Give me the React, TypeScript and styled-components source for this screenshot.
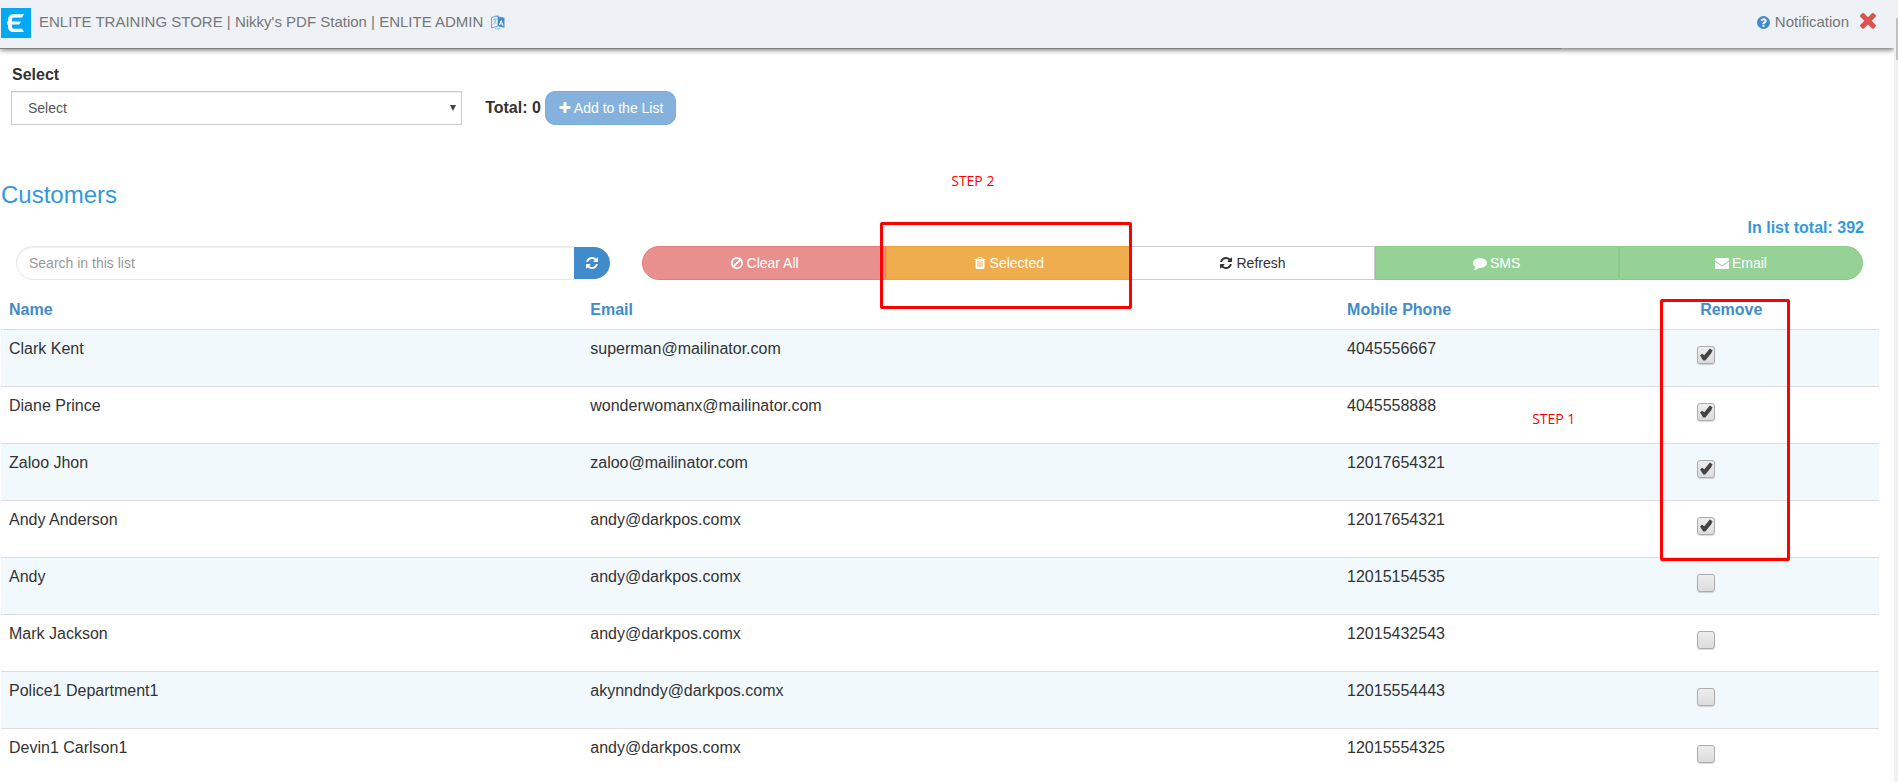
import React from 'react';
import styled, { createGlobalStyle, css } from 'styled-components';

const GlobalStyle = createGlobalStyle`
  *, *::before, *::after { box-sizing: border-box; }
  body {
    margin: 0;
    overflow: hidden;
    background: #fff;
    color: #333;
    font: 16px/24px "Liberation Sans", Arial, sans-serif;
  }
  button, input, select { font-family: inherit; }
`;

/* ---------- icons ---------- */

const ICONS = {
  question:
    'M1024 1376v-192q0-14-9-23t-23-9h-192q-14 0-23 9t-9 23v192q0 14 9 23t23 9h192q14 0 23-9t9-23zm256-672q0-88-55.5-163t-138.5-116-170-41q-243 0-371 213-15 24 8 42l132 100q7 6 19 6 16 0 25-12 53-68 86-92 34-24 86-24 48 0 85.5 26t37.5 59q0 38-20 61t-68 45q-63 28-115.5 86.5t-52.5 125.5v36q0 14 9 23t23 9h192q14 0 23-9t9-23q0-19 21.5-49.5t54.5-49.5q32-18 49-28.5t46-35 44.5-48 28-60.5 12.5-81zm384 192q0 209-103 385.5t-279.5 279.5-385.5 103-385.5-103-279.5-279.5-103-385.5 103-385.5 279.5-279.5 385.5-103 385.5 103 279.5 279.5 103 385.5z',
  times:
    'M1490 1322q0 40-28 68l-136 136q-28 28-68 28t-68-28l-294-294-294 294q-28 28-68 28t-68-28l-136-136q-28-28-28-68t28-68l294-294-294-294q-28-28-28-68t28-68l136-136q28-28 68-28t68 28l294 294 294-294q28-28 68-28t68 28l136 136q28 28 28 68t-28 68l-294 294 294 294q28 28 28 68z',
  plus:
    'M1600 736v192q0 40-28 68t-68 28h-416v416q0 40-28 68t-68 28h-192q-40 0-68-28t-28-68v-416h-416q-40 0-68-28t-28-68v-192q0-40 28-68t68-28h416v-416q0-40 28-68t68-28h192q40 0 68 28t28 68v416h416q40 0 68 28t28 68z',
  refresh:
    'M1639 1056q0 5-1 7-64 268-268 434.5t-478 166.5q-146 0-282.5-55t-243.5-157l-129 129q-19 19-45 19t-45-19-19-45v-448q0-26 19-45t45-19h448q26 0 45 19t19 45-19 45l-137 137q71 66 161 102t187 36q134 0 250-65t186-179q11-17 53-117 8-23 30-23h192q13 0 22.5 9.5t9.5 22.5zm25-800v448q0 26-19 45t-45 19h-448q-26 0-45-19t-19-45 19-45l138-138q-148-137-349-137-134 0-250 65t-186 179q-11 17-53 117-8 23-30 23h-199q-13 0-22.5-9.5t-9.5-22.5v-7q65-268 270-434.5t480-166.5q146 0 284 55.5t245 156.5l130-129q19-19 45-19t45 19 19 45z',
  ban:
    'M1440 893q0-161-87-295l-754 753q137 89 297 89 111 0 211.5-43.5t173.5-116.5 116-174.5 43-212.5zm-999 299l755-754q-135-91-300-91-148 0-273 73t-198 199-73 274q0 162 89 299zm1223-299q0 157-61 300t-163.5 246-245 164-298.5 61-298.5-61-245-164-163.5-246-61-300 61-299.5 163.5-245.5 245-164 298.5-61 298.5 61 245 164 163.5 245.5 61 299.5z',
  trash:
    'M704 1376v-704q0-14-9-23t-23-9h-64q-14 0-23 9t-9 23v704q0 14 9 23t23 9h64q14 0 23-9t9-23zm256 0v-704q0-14-9-23t-23-9h-64q-14 0-23 9t-9 23v704q0 14 9 23t23 9h64q14 0 23-9t9-23zm256 0v-704q0-14-9-23t-23-9h-64q-14 0-23 9t-9 23v704q0 14 9 23t23 9h64q14 0 23-9t9-23zm-544-992h448l-48-117q-7-9-17-11h-317q-10 2-17 11zm928 32v64q0 14-9 23t-23 9h-96v948q0 83-47 143.5t-113 60.5h-832q-66 0-113-58.5t-47-141.5v-952h-96q-14 0-23-9t-9-23v-64q0-14 9-23t23-9h309l70-167q15-37 54-63t79-26h320q40 0 79 26t54 63l70 167h309q14 0 23 9t9 23z',
  comment:
    'M1792 896q0 174-120 321.5t-326 233-450 85.5q-70 0-145-8-198 175-460 242-49 14-114 22-17 2-30.5-9t-17.5-29v-1q-3-4-.5-12t2-10 4.5-9.500l6-9 7-8.500 8-9q7-8 31-34.500t34.500-38 31-39.500 32.500-51 27-59 26-76q-157-89-247.500-220t-90.500-281q0-130 71-248.500t191-204.500 286-136.500 348-50.500q244 0 450 85.500t326 233 120 321.500z',
  envelope:
    'M1792 710v794q0 66-47 113t-113 47h-1472q-66 0-113-47t-47-113v-794q44 49 101 87 362 246 497 345 57 42 92.5 65.5t94.5 48 110 24.5h2q51 0 110-24.5t94.5-48 92.5-65.5q170-123 498-345 57-39 100-87zm0-294q0 79-49 151t-122 123q-376 261-468 325-10 7-42.5 31t-54 38.5-52 32.5-57.5 27-50 9h-2q-23 0-50-9t-57.5-27-52-32.5-54-38.5-42.5-31q-91-64-262-182.5t-205-142.5q-62-42-117-115.5t-55-136.5q0-78 41.5-130t118.5-52h1472q65 0 112.5 47t47.5 113z',
};

type IconName = keyof typeof ICONS;

const Svg = styled.svg`
  display: block;
  flex: none;
  fill: currentColor;
`;

const Icon = ({ name, size = 14 }: { name: IconName; size?: number }) => (
  <Svg width={size} height={size} viewBox="0 0 1792 1792" aria-hidden="true">
    <path d={ICONS[name]} />
  </Svg>
);

const Logo = () => (
  <Svg width="30" height="30" viewBox="0 0 30 30" aria-label="Enlite">
    <rect width="30" height="30" fill="#03a9f4" />
    <path
      d="M23 6.200L21 9.500H12.500Q11 9.500 11 11V13.500H20L18.200 16.500H11V19Q11 20.700 12.700 20.700H21L23 24H12.500Q7 24 7 18.500V16.500H6V13.500H7V12Q7 6.200 12.500 6.200Z"
      fill="#fff"
    />
  </Svg>
);

const LanguageIcon = () => (
  <Svg width="14" height="15" viewBox="0 0 14 15" aria-hidden="true">
    <path d="M.5 2.500L7 .7V11L.5 13Z" fill="#eef1f6" stroke="#6ba3d6" strokeWidth="1" />
    <path d="M2 5l3.500-1M3.800 3.200v1.300M5 4.500Q4.500 7.500 2 9.500M2.700 6.200Q4 8.200 5.500 8.500" fill="none" stroke="#8db9e0" />
    <path d="M4 .8L13.500 2.800V3.500L7 2.300Z" fill="#428bca" />
    <path d="M7 2.300l6.500 1v9.500L7 11.200Z" fill="#428bca" />
    <path d="M8.500 10l1.700-4.500 1.900 5.500M9.100 8.600l2.300.6" fill="none" stroke="#fff" />
    <path d="M4 13.500q3 1.200 5.500-.3" fill="none" stroke="#8db9e0" />
  </Svg>
);

/* ---------- page frame ---------- */

const Page = styled.div`
  display: grid;
  grid-template-columns: minmax(0, 1fr) 4px;
  height: 100vh;
  overflow: hidden;
`;

const Main = styled.main`
  min-width: 0;
`;

const ScrollTrack = styled.div`
  padding: 18px 0 0 2px;
  background: #f1f1f1;
`;

const ScrollThumb = styled.div`
  height: 42px;
  background: #c1c1c1;
`;

const Header = styled.header`
  display: flex;
  align-items: flex-start;
  height: 48px;
  padding: 8px 14px 0 1px;
  background: #eef1f6;
  color: #777;
  font-size: 15px;
  box-shadow: 0 2px 5px rgba(0, 0, 0, 0.55);
`;

const HeaderTitle = styled.span`
  display: flex;
  align-items: center;
  gap: 8px;
  height: 28px;
  margin-left: 8px;
`;

const HeaderLine = styled.div`
  width: 82.4%;
  height: 1px;
  background: #808080;
`;

const Notification = styled.a`
  display: flex;
  align-items: center;
  gap: 4px;
  height: 28px;
  margin-left: auto;
  color: #777;
  text-decoration: none;

  svg { color: #428bca; }
`;

const CloseButton = styled.button`
  display: flex;
  margin: 0 0 0 7px;
  padding: 0;
  border: 0;
  background: none;
  color: #d9534f;
  cursor: pointer;
`;

/* ---------- list picker ---------- */

const Picker = styled.section`
  padding: 14px 11px 0;
`;

const PickerLabel = styled.label`
  display: block;
  padding: 0 1px;
  font-weight: bold;
`;

const PickerRow = styled.div`
  display: flex;
  align-items: center;
  margin-top: 4px;
`;

const SelectWrap = styled.div`
  position: relative;
  width: 24.1%;

  &::after {
    content: '';
    position: absolute;
    top: 14px;
    right: 6px;
    border: 3px solid transparent;
    border-top: 6px solid #444;
    border-bottom: 0;
    pointer-events: none;
  }
`;

const Select = styled.select`
  display: block;
  width: 100%;
  height: 34px;
  padding: 0 16px;
  border: 1px solid #ccc;
  border-radius: 0;
  background: #fff;
  box-shadow: inset 0 1px 1px rgba(0, 0, 0, 0.075);
  color: #555;
  font-size: 14px;
  appearance: none;
`;

const Total = styled.strong`
  margin: 0 4px 0 23px;
`;

const AddButton = styled.button`
  display: flex;
  align-items: center;
  gap: 2px;
  height: 34px;
  padding: 0 12px;
  border: 1px solid #79abd9;
  border-radius: 10px;
  background: #85b2dc;
  color: #fff;
  font-size: 14px;
  cursor: pointer;
`;

/* ---------- toolbar ---------- */

const Heading = styled.h1`
  margin: 53px 0 0;
  padding: 0 1px;
  color: #3598db;
  font-size: 24px;
  font-weight: normal;
  line-height: 34px;
`;

const ListTotal = styled.p`
  margin: 4px 30px 0 0;
  color: #3598db;
  font-weight: bold;
  text-align: right;
`;

const Toolbar = styled.div`
  display: flex;
  gap: 32px;
  margin-top: 6px;
  padding: 0 31px 0 16px;
`;

const SearchForm = styled.form`
  display: flex;
  align-items: center;
  flex: 594 1 0;
  min-width: 0;
`;

const SearchInput = styled.input`
  flex: 1;
  min-width: 0;
  height: 34px;
  padding: 0 12px;
  border: 1px solid #e8e8e8;
  border-right: 0;
  border-radius: 17px 0 0 17px;
  box-shadow: inset 0 1px 1px rgba(0, 0, 0, 0.075);
  color: #555;
  font-size: 14px;

  &::placeholder { color: #999; opacity: 1; }
`;

const SearchButton = styled.button`
  display: flex;
  align-items: center;
  justify-content: center;
  width: 36px;
  height: 32px;
  padding: 0;
  border: 0;
  border-radius: 0 16px 16px 0;
  background: #428bca;
  color: #fff;
  cursor: pointer;
`;

const ButtonGroup = styled.div`
  display: flex;
  flex: 1221 1 0;
`;

const ButtonSlot = styled.div`
  position: relative;
  flex: 1 1 0;
`;

type Tone = 'danger' | 'warning' | 'plain' | 'success';

const tones: Record<Tone, ReturnType<typeof css>> = {
  danger: css`background: #e8908d; border-color: #e27d7a; color: #fff;`,
  warning: css`background: #f0ad4e; border-color: #eea236; color: #fff;`,
  plain: css`background: #fff; border-color: #ccc; color: #333;`,
  success: css`background: #96d296; border-color: #88ca88; color: #fff;`,
};

const GroupButton = styled.button<{ $tone: Tone; $edge?: 'start' | 'end' }>`
  display: flex;
  align-items: center;
  justify-content: center;
  gap: 3px;
  width: 100%;
  height: 34px;
  padding: 0;
  border: 1px solid;
  border-radius: ${({ $edge }) =>
    $edge === 'start' ? '17px 0 0 17px' : $edge === 'end' ? '0 17px 17px 0' : '0'};
  font-size: 14px;
  cursor: pointer;
  ${({ $tone }) => tones[$tone]}
`;

/* ---------- annotations over the page ---------- */

const Frame = styled.span<{ $area: 'button' | 'column' }>`
  position: absolute;
  z-index: 1;
  border: 3px solid #f00;
  border-radius: 2px;
  pointer-events: none;
  ${({ $area }) =>
    $area === 'button'
      ? css`top: -24px; right: -2px; bottom: -29px; left: -6px;`
      : css`top: 2px; left: -32px; width: 130px; height: 262px;`}
`;

const Note = styled.span<{ $area: 'button' | 'column' }>`
  position: absolute;
  color: #f00;
  font: 14px/20px "Open Sans", sans-serif;
  white-space: nowrap;
  ${({ $area }) =>
    $area === 'button' ? css`top: -75px; left: 65px;` : css`top: 112px; left: -160px;`}
`;

/* ---------- table ---------- */

const Table = styled.table`
  width: calc(100% - 16px);
  margin: 17px 15px 0 1px;
  border-collapse: collapse;
  table-layout: fixed;
`;

const Col = styled.col<{ $width: string }>`
  width: ${({ $width }) => $width};
`;

const HeadCell = styled.th`
  position: relative;
  height: 32px;
  padding: 1px 8px 0;
  color: #428bca;
  text-align: left;
  vertical-align: top;
`;

const Row = styled.tr`
  height: 57px;
  border-top: 1px solid #ddd;

  &:nth-child(odd) { background: #f1f9fd; }
`;

const Cell = styled.td`
  padding: 7px 8px 0;
  vertical-align: top;
`;

const CheckCell = styled.td`
  padding: 16px 5px 0;
  vertical-align: top;
`;

const Checkbox = styled.input`
  display: block;
  width: 18px;
  height: 18px;
  margin: 0;
  border: 1px solid #acacac;
  border-radius: 3px;
  background: linear-gradient(#ededed, #dcdcdc);
  box-shadow: 0 1px 1px rgba(0, 0, 0, 0.15);
  appearance: none;

  &:checked::after {
    content: '';
    display: block;
    width: 16px;
    height: 16px;
    background: #444;
    clip-path: polygon(12% 56%, 24% 45%, 39% 55%, 73% 12%, 90% 24%, 82% 42%, 45% 88%, 32% 88%);
  }
`;

const customers = [
  { name: 'Clark Kent', email: 'superman@mailinator.com', phone: '4045556667', remove: true },
  { name: 'Diane Prince', email: 'wonderwomanx@mailinator.com', phone: '4045558888', remove: true },
  { name: 'Zaloo Jhon', email: 'zaloo@mailinator.com', phone: '12017654321', remove: true },
  { name: 'Andy Anderson', email: 'andy@darkpos.comx', phone: '12017654321', remove: true },
  { name: 'Andy', email: 'andy@darkpos.comx', phone: '12015154535', remove: false },
  { name: 'Mark Jackson', email: 'andy@darkpos.comx', phone: '12015432543', remove: false },
  { name: 'Police1 Department1', email: 'akynndndy@darkpos.comx', phone: '12015554443', remove: false },
  { name: 'Devin1 Carlson1', email: 'andy@darkpos.comx', phone: '12015554325', remove: false },
];

export default function App() {
  return (
    <Page>
      <GlobalStyle />
      <Main>
        <Header>
          <Logo />
          <HeaderTitle>
            ENLITE TRAINING STORE | Nikky's PDF Station | ENLITE ADMIN
            <LanguageIcon />
          </HeaderTitle>
          <Notification href="#notification">
            <Icon name="question" size={15} />
            Notification
          </Notification>
          <CloseButton type="button" aria-label="Close">
            <Icon name="times" size={24} />
          </CloseButton>
        </Header>
        <HeaderLine />

        <Picker>
          <PickerLabel htmlFor="list">Select</PickerLabel>
          <PickerRow>
            <SelectWrap>
              <Select id="list" defaultValue="">
                <option value="">Select</option>
              </Select>
            </SelectWrap>
            <Total>Total: 0</Total>
            <AddButton type="button">
              <Icon name="plus" />
              Add to the List
            </AddButton>
          </PickerRow>
        </Picker>

        <Heading>Customers</Heading>
        <ListTotal>In list total: 392</ListTotal>

        <Toolbar>
          <SearchForm onSubmit={(e) => e.preventDefault()}>
            <SearchInput type="text" aria-label="Search in this list" placeholder="Search in this list" />
            <SearchButton type="submit" aria-label="Search">
              <Icon name="refresh" />
            </SearchButton>
          </SearchForm>
          <ButtonGroup>
            <ButtonSlot>
              <GroupButton type="button" $tone="danger" $edge="start">
                <Icon name="ban" />
                Clear All
              </GroupButton>
            </ButtonSlot>
            <ButtonSlot>
              <GroupButton type="button" $tone="warning">
                <Icon name="trash" />
                Selected
              </GroupButton>
              <Frame $area="button" />
              <Note $area="button">STEP 2</Note>
            </ButtonSlot>
            <ButtonSlot>
              <GroupButton type="button" $tone="plain">
                <Icon name="refresh" />
                Refresh
              </GroupButton>
            </ButtonSlot>
            <ButtonSlot>
              <GroupButton type="button" $tone="success">
                <Icon name="comment" />
                SMS
              </GroupButton>
            </ButtonSlot>
            <ButtonSlot>
              <GroupButton type="button" $tone="success" $edge="end">
                <Icon name="envelope" />
                Email
              </GroupButton>
            </ButtonSlot>
          </ButtonGroup>
        </Toolbar>

        <Table>
          <colgroup>
            <Col $width="30.95%" />
            <Col $width="40.3%" />
            <Col $width="18.8%" />
            <Col $width="9.95%" />
          </colgroup>
          <thead>
            <tr>
              <HeadCell>Name</HeadCell>
              <HeadCell>Email</HeadCell>
              <HeadCell>Mobile Phone</HeadCell>
              <HeadCell>
                Remove
                <Frame $area="column" />
                <Note $area="column">STEP 1</Note>
              </HeadCell>
            </tr>
          </thead>
          <tbody>
            {customers.map((c) => (
              <Row key={c.name}>
                <Cell>{c.name}</Cell>
                <Cell>{c.email}</Cell>
                <Cell>{c.phone}</Cell>
                <CheckCell>
                  <Checkbox type="checkbox" defaultChecked={c.remove} aria-label={`Remove ${c.name}`} />
                </CheckCell>
              </Row>
            ))}
          </tbody>
        </Table>
      </Main>
      <ScrollTrack>
        <ScrollThumb />
      </ScrollTrack>
    </Page>
  );
}
